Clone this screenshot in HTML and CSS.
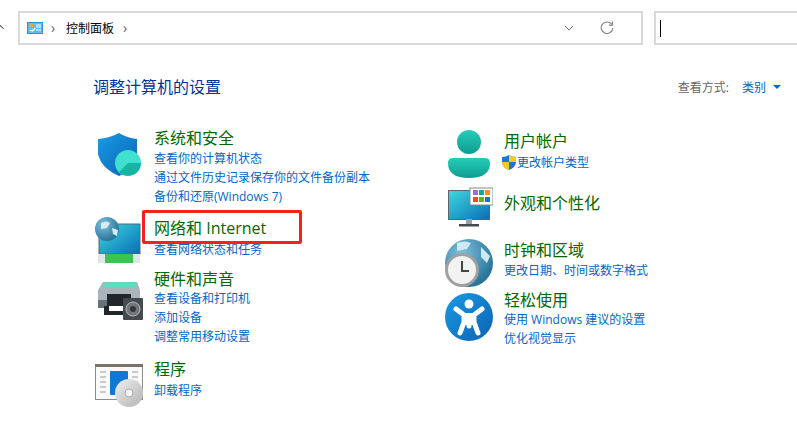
FILE: index.html
```html
<!DOCTYPE html>
<html lang="zh-CN">
<head>
    <meta charset="UTF-8">
    <title>控制面板</title>
    <link rel="stylesheet" href="styles.css">
</head>
<body>
    <svg class="defs" width="0" height="0">
        <defs>
            <linearGradient id="blue" x1="0" y1="0" x2="1" y2="1">
                <stop offset="0" stop-color="#1a9be6"/>
                <stop offset="1" stop-color="#0b62b0"/>
            </linearGradient>
            <linearGradient id="screen" x1="0" y1="0" x2="1" y2="1">
                <stop offset="0" stop-color="#3fd8e0"/>
                <stop offset="1" stop-color="#0a6db5"/>
            </linearGradient>
            <linearGradient id="teal" x1="0" y1="0" x2="0" y2="1">
                <stop offset="0" stop-color="#25cdb8"/>
                <stop offset="1" stop-color="#0f9c92"/>
            </linearGradient>
            <radialGradient id="earth" cx="0.35" cy="0.3" r="0.8">
                <stop offset="0" stop-color="#7fc0de"/>
                <stop offset="1" stop-color="#1d6a92"/>
            </radialGradient>
            <linearGradient id="disc" x1="0" y1="0" x2="1" y2="1">
                <stop offset="0" stop-color="#eeeeee"/>
                <stop offset="1" stop-color="#b4b4b4"/>
            </linearGradient>
        </defs>
    </svg>

    <div class="topbar">
        <div class="addr">
            <svg class="cp-icon" width="16" height="12" viewBox="0 0 16 12">
                <rect x="0.5" y="0.5" width="15" height="11" fill="#5cbdf0" stroke="#2f8fcf"/>
                <path d="M2 2h4v3H2z" fill="#f2a33a"/>
                <path d="M3 8q3 2 5-2" fill="none" stroke="#fff" stroke-width="1.5"/>
                <path d="M9 3h5M9 5h5M9 8h5" stroke="#fff"/>
            </svg>
            <span class="sep">›</span>
            <span class="crumb">控制面板</span>
            <span class="sep">›</span>
            <svg class="chev" width="10" height="6" viewBox="0 0 10 6">
                <path d="M1 1l4 4 4-4" fill="none" stroke="#777" stroke-width="1"/>
            </svg>
            <svg class="refresh" width="14" height="14" viewBox="0 0 14 14">
                <path d="M11.6 3.2A5.8 5.8 0 1 0 12.8 7" fill="none" stroke="#808080" stroke-width="1.1"/>
                <path d="M12.4 .6v3.5H8.9" fill="none" stroke="#808080" stroke-width="1.1"/>
            </svg>
        </div>
        <div class="search"><span class="caret"></span></div>
    </div>

    <div class="head">
        <h1>调整计算机的设置</h1>
        <div class="view">查看方式:<a>类别</a><span class="arrow"></span></div>
    </div>

    <div class="columns">
        <div class="col">
            <div class="cat cat-sys">
                <svg class="icon" width="48" height="48" viewBox="0 0 48 48">
                    <path d="M24 3q8 5 18 6v15q0 14-18 22Q6 38 3 24V9q12-1 21-6z" fill="url(#blue)"/>
                    <circle cx="33" cy="33" r="13" fill="#3fe0cf"/>
                    <path d="M33 33h13a13 13 0 0 1-22 9z" fill="#17b3a3"/>
                </svg>
                <div class="txt">
                    <h2>系统和安全</h2>
                    <a>查看你的计算机状态</a>
                    <a>通过文件历史记录保存你的文件备份副本</a>
                    <a>备份和还原(Windows 7)</a>
                </div>
            </div>
            <div class="cat cat-net">
                <svg class="icon" width="48" height="48" viewBox="0 0 48 48">
                    <rect x="4" y="8" width="41" height="30" fill="url(#screen)" stroke="#5a6670"/>
                    <rect x="3" y="38" width="42" height="9" fill="#dfe6e6"/>
                    <rect x="10" y="38" width="28" height="9" fill="#39c552"/>
                    <circle cx="12" cy="13" r="12" fill="url(#earth)"/>
                    <path d="M6 7q6-3 9 0l-3 5-6 1zM17 12l6 2-1 6-4-2z" fill="#d6ecf4"/>
                </svg>
                <div class="txt">
                    <h2>网络和 Internet</h2>
                    <a>查看网络状态和任务</a>
                </div>
                <div class="mark"></div>
            </div>
            <div class="cat cat-hw">
                <svg class="icon" width="48" height="48" viewBox="0 0 48 48">
                    <path d="M8 6h34l3 8v18H3V14z" fill="#a9b4bb"/>
                    <path d="M10 6h30l2 5H8z" fill="#5fdcc0"/>
                    <rect x="3" y="24" width="42" height="8" fill="#66717a"/>
                    <rect x="12" y="18" width="24" height="14" fill="#20262b"/>
                    <rect x="9" y="30" width="30" height="9" fill="#20262b"/>
                    <rect x="14" y="30" width="20" height="5" fill="#fff"/>
                    <rect x="28" y="22" width="20" height="22" rx="1" fill="#454a4f"/>
                    <circle cx="38" cy="33" r="7" fill="#70767a" stroke="#b5bbbf"/>
                    <circle cx="38" cy="33" r="3" fill="#33383c"/>
                </svg>
                <div class="txt">
                    <h2>硬件和声音</h2>
                    <a>查看设备和打印机</a>
                    <a>添加设备</a>
                    <a>调整常用移动设置</a>
                </div>
            </div>
            <div class="cat cat-prog">
                <svg class="icon" width="48" height="48" viewBox="0 0 48 48">
                    <rect x="0.5" y="3.5" width="47" height="35" fill="#fafafa" stroke="#8f8a85"/>
                    <rect x="0" y="3" width="48" height="3" fill="#79736d"/>
                    <rect x="15" y="10" width="18" height="24" rx="1" fill="#0f78d4"/>
                    <path d="M5 11h6M5 16h6M5 21h6M5 26h6M5 31h6M37 11h6M37 16h6M37 21h6" stroke="#9a9a9a"/>
                    <circle cx="34" cy="32" r="14" fill="url(#disc)"/>
                    <circle cx="34" cy="32" r="4" fill="#f5f5f5" stroke="#aaa"/>
                </svg>
                <div class="txt">
                    <h2>程序</h2>
                    <a>卸载程序</a>
                </div>
            </div>
        </div>

        <div class="col">
            <div class="cat cat-user">
                <svg class="icon" width="48" height="48" viewBox="0 0 48 48">
                    <circle cx="24" cy="12" r="12" fill="url(#teal)"/>
                    <path d="M8 28h32q5 0 5 5 0 15-21 15T3 33q0-5 5-5z" fill="url(#teal)"/>
                </svg>
                <div class="txt">
                    <h2>用户帐户</h2>
                    <a class="uac">
                        <svg width="14" height="15" viewBox="0 0 14 15">
                            <path d="M7 0q3 2 7 2v5q0 5-7 8-7-3-7-8V2q4 0 7-2z" fill="#1878d8"/>
                            <path d="M7 0q3 2 7 2v5H7zM7 7v8q-7-3-7-8z" fill="#fbc820"/>
                        </svg>
                        更改帐户类型
                    </a>
                </div>
            </div>
            <div class="cat cat-look">
                <svg class="icon" width="48" height="48" viewBox="0 0 48 48">
                    <rect x="3.5" y="5.5" width="41" height="29" fill="url(#screen)" stroke="#5a6670"/>
                    <rect x="21" y="34" width="6" height="5" fill="#9aa3a8"/>
                    <rect x="14" y="39" width="20" height="2.5" fill="#444c52"/>
                    <rect x="25" y="3" width="23" height="17" fill="#fff" stroke="#888"/>
                    <rect x="28" y="5" width="5" height="5" fill="#9b6fd0"/>
                    <rect x="34" y="5" width="5" height="5" fill="#1aa68f"/>
                    <rect x="40" y="5" width="5" height="5" fill="#f0920f"/>
                    <rect x="28" y="12" width="5" height="5" fill="#e8501a"/>
                    <rect x="34" y="12" width="5" height="5" fill="#6cb00f"/>
                    <rect x="40" y="12" width="5" height="5" fill="#0a78d4"/>
                </svg>
                <div class="txt">
                    <h2>外观和个性化</h2>
                </div>
            </div>
            <div class="cat cat-time">
                <svg class="icon" width="48" height="48" viewBox="0 0 48 48">
                    <circle cx="24" cy="24" r="24" fill="url(#earth)"/>
                    <path d="M12 4q8-3 14 0l-4 6-10 2zM36 8l9 9-3 7-6-6z" fill="#cfe8f2"/>
                    <circle cx="17" cy="31" r="15.500" fill="#f2f2f2" stroke="#a0a0a0" stroke-width="3"/>
                    <path d="M17 22v10h7" fill="none" stroke="#444" stroke-width="2"/>
                </svg>
                <div class="txt">
                    <h2>时钟和区域</h2>
                    <a>更改日期、时间或数字格式</a>
                </div>
            </div>
            <div class="cat cat-ease">
                <svg class="icon" width="48" height="48" viewBox="0 0 48 48">
                    <circle cx="24" cy="24" r="24" fill="url(#blue)"/>
                    <circle cx="24" cy="11" r="4.500" fill="#fff"/>
                    <path d="M11 16l8 6v7l-4 11M37 16l-8 6v7l4 11M19 22q5 2 10 0M24 30v3" fill="none" stroke="#fff" stroke-width="5" stroke-linecap="round" stroke-linejoin="round"/>
                    <path d="M19 20h10v12H19z" fill="#fff"/>
                </svg>
                <div class="txt">
                    <h2>轻松使用</h2>
                    <a>使用 Windows 建议的设置</a>
                    <a>优化视觉显示</a>
                </div>
            </div>
        </div>
    </div>
    <span class="up"></span>
</body>
</html>
```

FILE: styles.css
```css
html, body {
    margin: 0;
    padding: 0;
    height: 432px;
    overflow: hidden;
    background: #fff;
}
body {
    font-family: "Open Sans", "Noto Sans CJK SC", sans-serif;
    font-size: 12px;
    color: #000;
    position: relative;
}
.defs {
    position: absolute;
}
.up {
    position: absolute;
    left: -2px;
    top: 26px;
    width: 4px;
    height: 4px;
    border-left: 1px solid #666;
    border-top: 1px solid #666;
    transform: rotate(45deg);
}
.topbar {
    display: flex;
    gap: 11px;
    padding: 11px 0 0 18px;
}
.addr, .search {
    height: 34px;
    box-sizing: border-box;
    border: 2px solid #d9d9d9;
    display: flex;
    align-items: center;
}
.addr {
    width: 625px;
    padding-left: 7px;
}
.search {
    flex: 1;
    border-right: none;
    padding-left: 4px;
}
.caret {
    width: 1px;
    height: 17px;
    background: #000;
}
.cp-icon {
    margin-right: 8px;
}
.sep {
    color: #666;
    font-size: 14px;
    line-height: 14px;
    width: 5px;
    margin-right: 10px;
}
.crumb {
    margin-right: 9px;
}
.chev {
    margin-left: 426px;
}
.refresh {
    margin-left: 26px;
}
.head {
    display: flex;
    justify-content: space-between;
    align-items: center;
    padding: 32px 16px 0 93px;
    height: 20px;
}
h1 {
    margin: 0;
    font-size: 16px;
    font-weight: normal;
    color: #003399;
    line-height: 20px;
}
.view {
    color: #666;
    display: flex;
    align-items: center;
}
.view a {
    color: #0066cc;
    margin-left: 13px;
}
.arrow {
    margin-left: 7px;
    border-left: 4px solid transparent;
    border-right: 4px solid transparent;
    border-top: 4px solid #0066cc;
}
.columns {
    display: flex;
    padding: 31px 0 0 95px;
}
.col {
    width: 350px;
}
.cat {
    display: flex;
    position: relative;
}
.icon {
    flex: none;
    margin-right: 11px;
}
.txt {
    display: flex;
    flex-direction: column;
}
h2 {
    margin: 0;
    font-size: 16px;
    font-weight: normal;
    line-height: 20px;
    color: #006a00;
}
.txt a {
    color: #0066cc;
    line-height: 19px;
    white-space: nowrap;
}
.uac {
    display: flex;
    align-items: center;
    gap: 1px;
    margin-left: -2px;
}

.cat-sys .icon { margin-top: 2px; }
.cat-sys h2 { margin-bottom: 1px; }
.cat-net { margin-top: 12px; }
.cat-net .icon { margin-top: -2px; margin-bottom: 0; }
.cat-net h2 { margin-bottom: 2px; }
.cat-hw { margin-top: 5px; }
.cat-hw .icon { margin-top: 7px; }
.cat-hw h2 { margin-bottom: 0; }
.cat-prog { margin-top: 13px; }
.cat-prog .icon { margin-top: 2px; }
.cat-prog h2 { margin-bottom: 2px; }

.cat-user { margin-top: 3px; }
.cat-user .icon { margin-top: -1px; }
.cat-user h2 { margin-bottom: 2px; }
.cat-look { margin-top: 15px; }
.cat-look .icon { margin-top: -8px; }
.cat-time { margin-top: 7px; }
.cat-time .icon { margin-top: -1px; }
.cat-time h2 { margin-bottom: 1px; }
.cat-ease { margin-top: 3px; }
.cat-ease .icon { margin-top: 3px; }

.mark {
    position: absolute;
    left: 47px;
    top: -8px;
    width: 160px;
    height: 34px;
    box-sizing: border-box;
    border: 3px solid #f5221b;
    border-radius: 2px;
}
```
